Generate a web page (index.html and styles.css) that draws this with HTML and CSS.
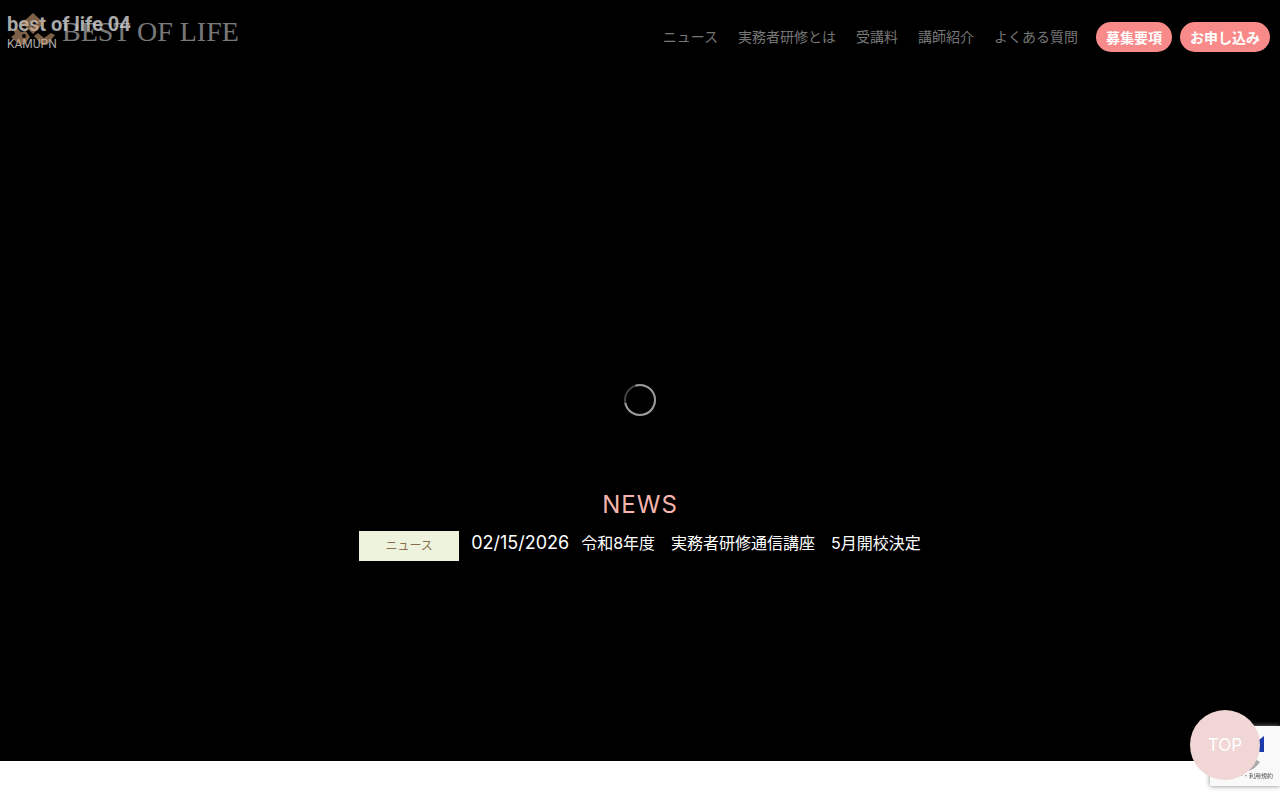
FILE: index.html
```
<!DOCTYPE html>
<html lang="ja">

<head>
    <meta charset="UTF-8">
    <meta name="viewport" content="width=device-width, initial-scale=1.0">
    <title>BEST OF LIFE</title>
    <link rel="stylesheet" href="styles.css">
</head>

<body>
    <header class="header">
        <a class="logo" href="#">
            <svg class="logo-mark" viewBox="0 0 44 34" aria-hidden="true">
                <path fill-rule="evenodd" d="M22 0 L33 10 L22 21 L11 10 Z M22 7 L18 11 L22 14 L26 10 Z" />
                <path fill-rule="evenodd" d="M6 15 L10 19 L15 18 L19 24 L14 31 L9 32 L0 24 L4 21 L3 18 Z M11 23 A2 2 0 1 0 15 23 A2 2 0 1 0 11 23 Z" />
                <path d="M23 23 L27 20 L33 25 L40 20 L44 22 L36 32 L31 32 Z" />
            </svg>
            <span class="logo-text">BEST OF LIFE</span>
        </a>
        <nav class="nav">
            <div class="nav-links">
                <a href="#news">ニュース</a>
                <a href="#about">実務者研修とは</a>
                <a href="#price">受講料</a>
                <a href="#teacher">講師紹介</a>
                <a href="#faq">よくある質問</a>
            </div>
            <div class="nav-buttons">
                <a class="pill" href="#guide">募集要項</a>
                <a class="pill" href="#apply">お申し込み</a>
            </div>
        </nav>
    </header>

    <main class="hero">
        <!-- video title shown while the player loads -->
        <div class="video-info">
            <h1 class="video-title">best of life 04</h1>
            <p class="video-author">KAMUPN</p>
        </div>
        <svg class="spinner" viewBox="0 0 34 34" aria-hidden="true">
            <circle class="spinner-track" cx="17" cy="17" r="15" />
            <path class="spinner-arc" d="M12.5 2.7 A15 15 0 1 1 2.3 20" />
        </svg>
        <section class="news" id="news">
            <h2 class="news-heading">NEWS</h2>
            <div class="news-row">
                <a class="news-tag" href="#news">ニュース</a>
                <time class="news-date" datetime="2026-02-15">02/15/2026</time>
                <a class="news-title" href="#news">令和8年度　実務者研修通信講座　5月開校決定</a>
            </div>
        </section>
    </main>

    <div class="captcha">
        <svg class="captcha-mark" viewBox="0 0 40 40" aria-hidden="true">
            <path fill="#1c3aa9" d="M40 3 V19 H28 V11 L35 7 Z" />
            <path fill="#4285f4" d="M18 1 V9 A11 11 0 0 0 8 15 L2 9 A20 20 0 0 1 18 1 Z" />
            <path fill="#ababab" d="M2 20 H16 L11 25 A11 11 0 0 0 28 24 L36 29 A20 20 0 0 1 6 34 Z" />
        </svg>
        <span class="captcha-text">シー・利用規約</span>
    </div>
    <a class="page-top" href="#">TOP</a>
</body>

</html>
```
FILE: styles.css
```
* {
    box-sizing: border-box;
}

body {
    margin: 0;
    background-color: #fff;
    color: #fff;
    font-family: Inter, "Noto Sans CJK JP", sans-serif;
    font-size: 16px;
}

a {
    color: inherit;
    text-decoration: none;
}

/* header lies over the video */
.header {
    position: absolute;
    top: 0;
    left: 0;
    right: 0;
    z-index: 2;
    display: flex;
    align-items: flex-start;
    justify-content: space-between;
    padding: 13px 10px 0 11px;
}

.logo {
    display: flex;
    gap: 7px;
    opacity: 0.6;
}

.logo-mark {
    width: 44px;
    height: 34px;
    fill: #d0a078;
}

.logo-text {
    color: #c8c8c8;
    font-family: "Liberation Serif", serif;
    font-size: 28px;
    line-height: 38px;
    white-space: nowrap;
}

.nav {
    display: flex;
    align-items: flex-start;
    gap: 18px;
    padding-top: 9px;
    color: #777;
    font-family: "Noto Sans CJK JP", sans-serif;
    font-size: 14px;
    line-height: 30px;
    white-space: nowrap;
}

.nav-links {
    display: flex;
    gap: 20px;
    line-height: 28px;
}

.nav-buttons {
    display: flex;
    gap: 8px;
}

.pill {
    padding: 0 10px;
    border-radius: 15px;
    background-color: #f88a8a;
    color: #fff;
    font-weight: bold;
}

.hero {
    position: relative;
    display: flex;
    flex-direction: column;
    justify-content: flex-end;
    min-height: calc(95vh + 1px);
    padding-bottom: 200px;
    background-color: #000;
}

.video-info {
    position: absolute;
    top: 12px;
    left: 7px;
    font-family: Roboto, sans-serif;
}

.video-title {
    margin: 0;
    color: #aaa;
    font-size: 20px;
    font-weight: bold;
    line-height: 24px;
}

.video-author {
    margin: 0;
    color: #aaa;
    font-size: 12px;
    line-height: 16px;
}

.spinner {
    position: fixed;
    top: calc(50% - 17px);
    left: calc(50% - 17px);
    width: 34px;
    height: 34px;
    fill: none;
    stroke-width: 2;
}

.spinner-track {
    stroke: #444;
}

.spinner-arc {
    stroke: #999;
}

.news {
    text-align: center;
}

.news-heading {
    margin: 0 0 11px;
    color: #f5b5ae;
    font-size: 24px;
    font-weight: normal;
    line-height: 30px;
    letter-spacing: 1px;
}

.news-row {
    display: flex;
    justify-content: center;
    gap: 12px;
    line-height: 24px;
}

.news-tag {
    width: 100px;
    background-color: #edf3dc;
    color: #8b6f50;
    font-size: 12px;
    line-height: 30px;
}

.news-date {
    font-size: 18px;
}

.captcha {
    position: fixed;
    right: 0;
    bottom: 14px;
    z-index: 3;
    display: flex;
    flex-direction: column;
    align-items: flex-end;
    width: 70px;
    height: 60px;
    padding: 7px 7px 0 0;
    border-radius: 2px 0 0 2px;
    background-color: #f9f9f9;
    box-shadow: 0 0 5px #808080;
    color: #555;
}

.captcha-mark {
    width: 40px;
    height: 40px;
    margin-right: 9px;
}

.captcha-text {
    font-family: "Noto Sans CJK JP", sans-serif;
    font-size: 6px;
    line-height: 6px;
    white-space: nowrap;
}

.page-top {
    position: fixed;
    right: 20px;
    bottom: 20px;
    z-index: 4;
    width: 70px;
    height: 70px;
    border-radius: 50%;
    background-color: #f0d6d4;
    font-size: 17px;
    line-height: 70px;
    text-align: center;
}
```
